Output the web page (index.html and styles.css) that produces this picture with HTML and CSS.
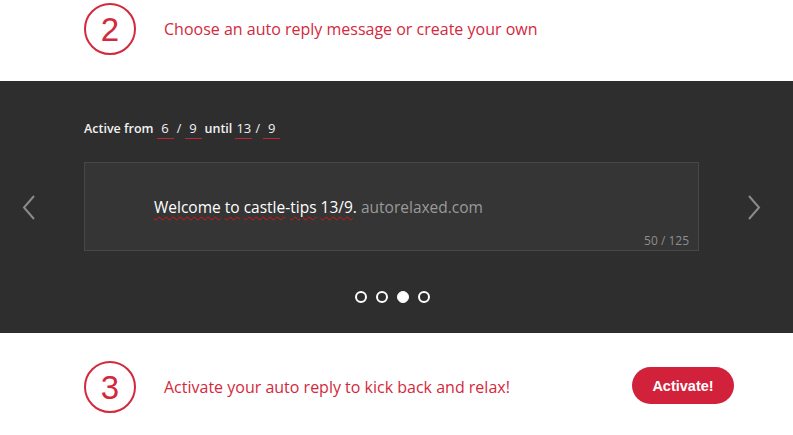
FILE: index.html
```html
<!DOCTYPE html>
<html>
<head>
<meta charset="utf-8">
<link rel="stylesheet" href="styles.css">
</head>
<body>
<section class="step step-top">
  <div class="num">2</div>
  <div class="label">Choose an auto reply message or create your own</div>
</section>
<section class="dark">
  <div class="active">
    <span>Active from</span>
    <span class="field first">6</span><span class="sep">/</span><span class="field">9</span>
    <span class="until">until</span>
    <span class="field">13</span><span class="sep">/</span><span class="field">9</span>
  </div>
  <div class="carousel">
    <svg class="arrow" width="20" height="30" viewBox="0 0 20 30"><path d="M15 4 L5 15.5 L15 27" fill="none" stroke="#8a8a8a" stroke-width="2"/></svg>
    <div class="box">
      <div class="msg"><span class="sp">Welcome</span> <span class="sp">to</span> <span class="sp">castle</span>-<span class="sp">tips</span> <span class="sp">13/9</span>. <span class="url">autorelaxed.com</span></div>
      <div class="count">50 / 125</div>
    </div>
    <svg class="arrow" width="20" height="30" viewBox="0 0 20 30"><path d="M5 4 L15 15.5 L5 27" fill="none" stroke="#8a8a8a" stroke-width="2"/></svg>
  </div>
  <div class="dots"><span class="dot"></span><span class="dot"></span><span class="dot on"></span><span class="dot"></span></div>
</section>
<section class="step step-bottom">
  <div class="num">3</div>
  <div class="label">Activate your auto reply to kick back and relax!</div>
  <button class="btn">Activate!</button>
</section>
</body>
</html>
```
FILE: styles.css
```css
html, body { margin: 0; padding: 0; background: #fff; }
body { width: 793px; height: 435px; overflow: hidden; font-family: "Open Sans", sans-serif; }
.step { display: flex; align-items: center; padding-left: 84px; padding-right: 59px; }
.step-top { height: 78px; padding-top: 3px; align-items: flex-start; }
.step-bottom { padding-top: 28px; }
.num {
  width: 48px; height: 48px; border: 2px solid #d3293c; border-radius: 50%;
  display: flex; align-items: center; justify-content: center;
  font-family: "Liberation Sans", Arial, sans-serif; font-size: 33px; color: #d3293c;
  line-height: 1; flex: none;
}
.label { margin-left: 28px; font-size: 16px; color: #d3293c; line-height: 52px; flex: 1; }
.btn {
  flex: none; width: 102px; height: 37px; border: none; border-radius: 19px;
  background: #d2213a; color: #fff; font-family: "Liberation Sans", Arial, sans-serif;
  font-weight: bold; font-size: 14.5px; padding: 0; margin-top: -3px;
}
.dark { background: #2e2e2e; height: 252px; box-sizing: border-box; padding-top: 39px; }
.active { display: flex; align-items: baseline; margin-left: 84px; font-size: 12.5px; color: #f2f2f2; font-weight: 600; height: 17px; }
.field { display: inline-block; width: 17px; text-align: center; border-bottom: 1px solid #c12337; font-weight: 400; font-size: 13px; line-height: 16px; padding-bottom: 2px; }
.field.first { margin-left: 3px; }
.sep { width: 11px; text-align: center; font-weight: 400; }
.until { margin-left: 3px; margin-right: 3px; }
.carousel { display: flex; align-items: center; margin-top: 25px; padding-left: 19px; }
.arrow { flex: none; }
.box {
  width: 615px; height: 89px; box-sizing: border-box; margin: 0 45px;
  background: #353535; border: 1px solid #474747; position: relative;
  padding: 34px 0 0 69px;
}
.msg { font-size: 15.5px; color: #fff; line-height: 20px; }
.sp { text-decoration: underline wavy #d11; text-decoration-thickness: 1px; text-underline-offset: 3px; }
.url { color: #9a9a9a; }
.count { position: absolute; right: 9px; bottom: 1px; font-size: 12px; color: #8e8e8e; }
.dots { display: flex; justify-content: center; gap: 9px; margin-top: 40px; padding-right: 8px; }
.dot { width: 8px; height: 8px; border: 2px solid #fff; border-radius: 50%; }
.dot.on { background: #fff; width: 10px; height: 10px; border: 1px solid #fff; }
```
